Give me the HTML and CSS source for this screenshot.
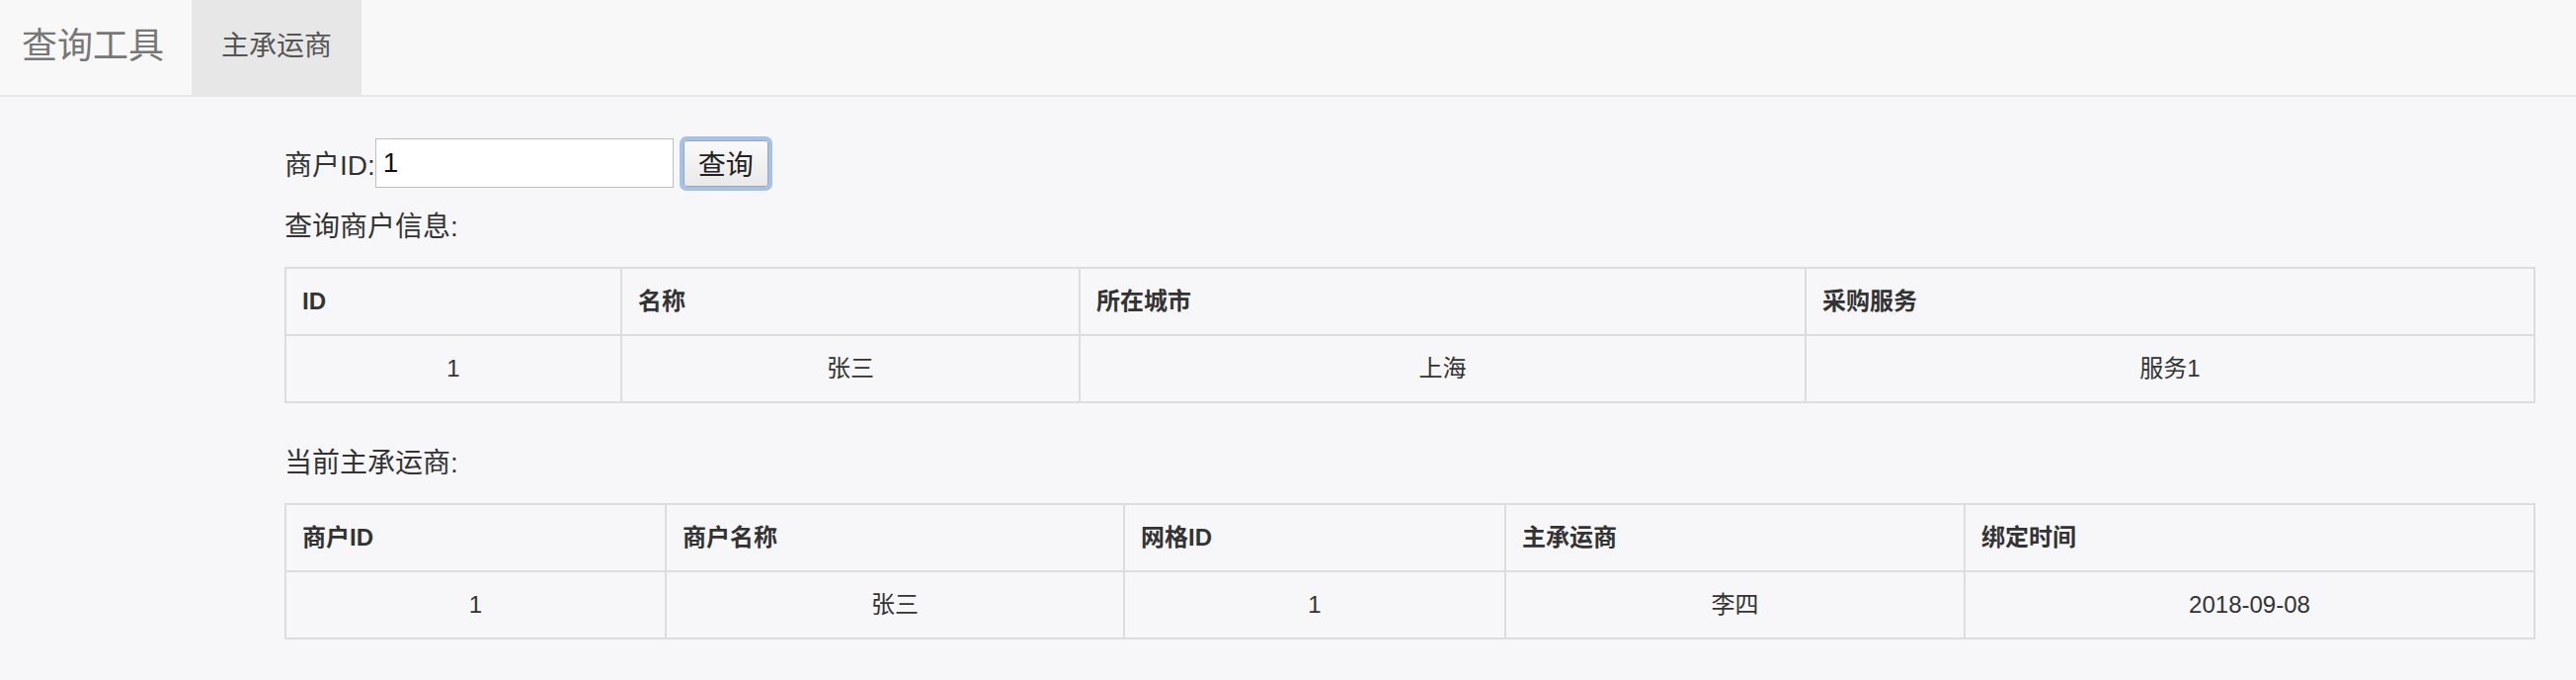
FILE: index.html
```html
<!DOCTYPE html>
<html lang="zh-CN">
<head>
<meta charset="utf-8">
<title>查询工具</title>
<link rel="stylesheet" href="styles.css">
</head>
<body>
<header class="navbar">
  <div class="brand">查询工具</div>
  <nav class="nav">
    <div class="nav-item active">主承运商</div>
  </nav>
</header>
<main class="main">
  <form class="query-form">
    <label class="query-label" for="mid">商户ID:</label>
    <input class="query-input" id="mid" type="text" value="1">
    <button class="query-btn" type="button">查询</button>
  </form>

  <p class="section-title">查询商户信息:</p>
  <table class="data-table">
    <colgroup>
      <col class="t1-c1"><col class="t1-c2"><col class="t1-c3"><col class="t1-c4">
    </colgroup>
    <thead>
      <tr><th>ID</th><th>名称</th><th>所在城市</th><th>采购服务</th></tr>
    </thead>
    <tbody>
      <tr><td>1</td><td>张三</td><td>上海</td><td>服务1</td></tr>
    </tbody>
  </table>

  <p class="section-title">当前主承运商:</p>
  <table class="data-table">
    <colgroup>
      <col class="t2-c1"><col class="t2-c2"><col class="t2-c3"><col class="t2-c4"><col class="t2-c5">
    </colgroup>
    <thead>
      <tr><th>商户ID</th><th>商户名称</th><th>网格ID</th><th>主承运商</th><th>绑定时间</th></tr>
    </thead>
    <tbody>
      <tr><td>1</td><td>张三</td><td>1</td><td>李四</td><td>2018-09-08</td></tr>
    </tbody>
  </table>
</main>
</body>
</html>
```

FILE: styles.css
```css
* {
  box-sizing: border-box;
}

html, body {
  margin: 0;
  padding: 0;
}

body {
  background: #f7f7f9;
  color: #333;
  font-family: "Liberation Sans", "Noto Sans CJK SC", sans-serif;
  font-size: 28px;
}

.navbar {
  display: flex;
  height: 98px;
  background: #f8f8f8;
  border-bottom: 2px solid #e7e7e7;
}

.brand {
  padding: 0 28px 2px 22px;
  font-size: 36px;
  line-height: 94px;
  color: #777;
}

.nav {
  display: flex;
}

.nav-item {
  padding: 0 30px 2px;
  font-size: 28px;
  line-height: 94px;
  color: #555;
}

.nav-item.active {
  background: #e7e7e7;
}

.main {
  padding: 0 41px 0 288px;
}

.query-form {
  display: flex;
  align-items: center;
  height: 56px;
  margin: 39px 0 17px;
}

.query-label {
  font-size: 28px;
  color: #333;
}

.query-input {
  width: 302px;
  height: 50px;
  margin: 0;
  padding: 0 7px;
  border: 1px solid #bdbdbd;
  background: #fff;
  font-family: "Liberation Sans", "Noto Sans CJK SC", sans-serif;
  font-size: 28px;
  color: #111;
  outline: none;
}

.query-btn {
  width: 86px;
  height: 47px;
  margin-left: 10px;
  padding: 0;
  border: 1px solid #a3a3a3;
  border-radius: 3px;
  background: linear-gradient(#f9f9f9, #e9e9e9);
  box-shadow: 0 0 0 4px #a3c2ec;
  font-family: "Liberation Sans", "Noto Sans CJK SC", sans-serif;
  font-size: 28px;
  color: #222;
}

.section-title {
  margin: 0 0 20px;
  line-height: 40px;
  font-size: 28px;
  color: #333;
}

.data-table {
  width: 100%;
  table-layout: fixed;
  border-collapse: separate;
  border-spacing: 0;
  border-top: 2px solid #ddd;
  border-left: 2px solid #ddd;
  margin-bottom: 41px;
  font-size: 24px;
  color: #333;
}

.data-table th,
.data-table td {
  height: 68px;
  padding: 0 16px;
  line-height: 40px;
  border-right: 2px solid #ddd;
  border-bottom: 2px solid #ddd;
  vertical-align: middle;
  white-space: nowrap;
}

.data-table th {
  text-align: left;
  font-weight: bold;
}

.data-table td {
  text-align: center;
}

.t1-c1 { width: 340px; }
.t1-c2 { width: 464px; }
.t1-c3 { width: 735px; }
.t1-c4 { width: 738px; }

.t2-c1 { width: 385px; }
.t2-c2 { width: 464px; }
.t2-c3 { width: 386px; }
.t2-c4 { width: 465px; }
.t2-c5 { width: 577px; }
```
